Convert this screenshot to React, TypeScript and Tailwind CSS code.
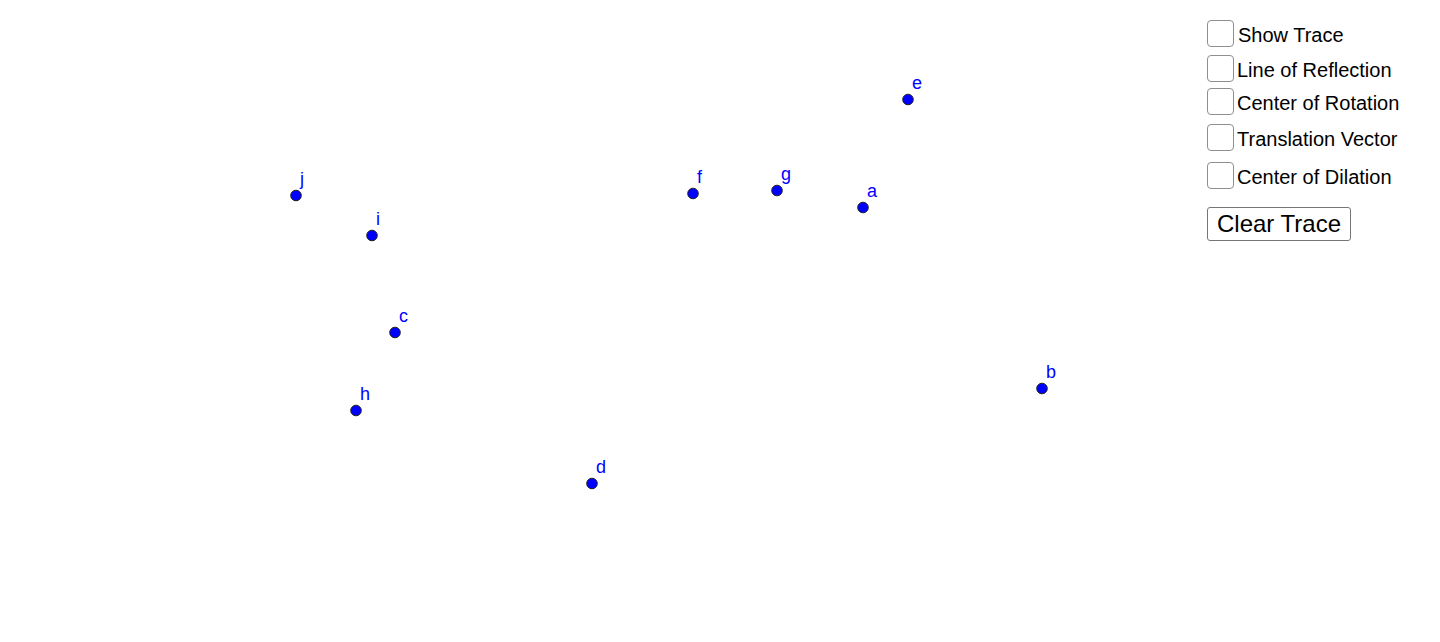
import * as React from 'react'

type Pt = { id: string; x: number; y: number }

const points: Pt[] = [
  { id: 'e', x: 908, y: 99.5 },
  { id: 'j', x: 296, y: 195.5 },
  { id: 'f', x: 693, y: 193.5 },
  { id: 'g', x: 777, y: 190.5 },
  { id: 'a', x: 863, y: 207.5 },
  { id: 'i', x: 372, y: 235.5 },
  { id: 'c', x: 395, y: 332.5 },
  { id: 'b', x: 1042, y: 388.5 },
  { id: 'h', x: 356, y: 410.5 },
  { id: 'd', x: 592, y: 483.5 }
]

const options = [
  { label: 'Show Trace', mt: 'mt-0', gap: 'ml-[4px]' },
  { label: 'Line of Reflection', mt: 'mt-[8px]', gap: 'ml-[3px]' },
  { label: 'Center of Rotation', mt: 'mt-[6px]', gap: 'ml-[3px]' },
  { label: 'Translation Vector', mt: 'mt-[9px]', gap: 'ml-[3px]' },
  { label: 'Center of Dilation', mt: 'mt-[11px]', gap: 'ml-[3px]' }
]

function CheckRow({ label, mt, gap }: { label: string; mt: string; gap: string }) {
  const [checked, setChecked] = React.useState(false)
  return (
    <label className={`flex items-center h-[27px] cursor-pointer select-none ${mt}`}>
      <span
        onClick={() => setChecked(c => !c)}
        className="w-[27px] h-[27px] rounded-[4px] border border-[#8f8f8f] bg-white flex items-center justify-center"
      >
        {checked && <span className="text-[18px] leading-none text-black">✓</span>}
      </span>
      <span className={`${gap} pt-[2px] text-[20px] leading-none text-black`}>{label}</span>
    </label>
  )
}

export default function App() {
  return (
    <div
      className="relative w-[1440px] h-[642px] bg-white overflow-hidden"
      style={{ fontFamily: '"Liberation Sans", Arial, sans-serif' }}
    >
      <svg className="absolute inset-0" width={1440} height={642}>
        {points.map(p => (
          <g key={p.id}>
            <circle cx={p.x} cy={p.y} r={5.3} fill="#0000ff" stroke="#222222" strokeWidth={1} />
            <text
              x={p.x + 4}
              y={p.y - 11}
              fill="#0000ff"
              fontSize={18}
              fontFamily='"Liberation Sans", Arial, sans-serif'
            >
              {p.id}
            </text>
          </g>
        ))}
      </svg>

      <div className="absolute left-[1207px] top-[20px] flex flex-col">
        {options.map(o => (
          <CheckRow key={o.label} {...o} />
        ))}
        <button
          type="button"
          className="mt-[18px] w-[144px] h-[34px] rounded-[3px] border border-[#767676] bg-white text-[24px] leading-none text-black text-left pl-[9px]"
        >
          Clear Trace
        </button>
      </div>
    </div>
  )
}
